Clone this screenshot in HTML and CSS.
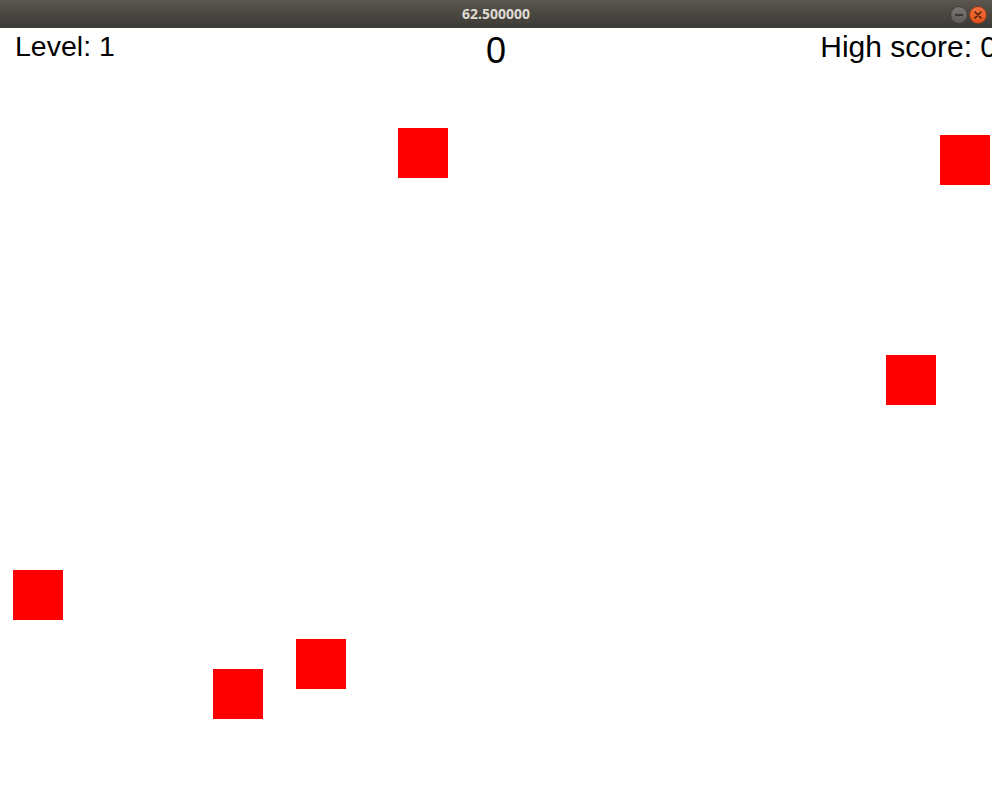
FILE: index.html
```html
<!DOCTYPE html>
<html>
<head>
<meta charset="utf-8">
<link rel="stylesheet" href="styles.css">
</head>
<body>
<div class="window">
  <div class="titlebar">
    <span class="title">62.500000</span>
    <div class="controls">
      <span class="btn btn-min"><span class="dash"></span></span>
      <span class="btn btn-close"><svg width="8" height="8" viewBox="0 0 8 8"><path d="M1 1L7 7M7 1L1 7" stroke="#3a1a0c" stroke-width="1.4" stroke-linecap="round"/></svg></span>
    </div>
  </div>
  <div class="game">
    <div class="hud">
      <span class="level">Level: 1</span>
      <span class="score">0</span>
      <span class="high">High score: 0</span>
    </div>
    <div class="block" style="left:398px;top:100px"></div>
    <div class="block" style="left:940px;top:107px"></div>
    <div class="block" style="left:886px;top:327px"></div>
    <div class="block" style="left:13px;top:542px"></div>
    <div class="block" style="left:296px;top:611px"></div>
    <div class="block" style="left:213px;top:641px"></div>
  </div>
</div>
</body>
</html>
```

FILE: styles.css
```css
html, body {
  margin: 0;
  padding: 0;
  width: 992px;
  height: 812px;
  overflow: hidden;
  background: #ffffff;
}

.window {
  display: flex;
  flex-direction: column;
  width: 992px;
  height: 812px;
}

.titlebar {
  position: relative;
  height: 28px;
  flex: 0 0 28px;
  background: linear-gradient(to bottom, #5b5750 0%, #4a4741 50%, #3c3b37 100%);
  display: flex;
  align-items: center;
  justify-content: center;
}

.title {
  font-family: "Open Sans", "DejaVu Sans", sans-serif;
  font-weight: 700;
  font-size: 14px;
  color: #dfdbd2;
  line-height: 28px;
}

.controls {
  position: absolute;
  right: 5px;
  top: 6px;
  display: flex;
  gap: 1px;
}

.btn {
  width: 18px;
  height: 18px;
  border-radius: 50%;
  box-sizing: border-box;
  display: flex;
  align-items: center;
  justify-content: center;
}

.btn-min {
  background: linear-gradient(to bottom, #7a7671, #5f5c57);
  border: 1px solid #3f3d39;
}

.dash {
  width: 8px;
  height: 1.5px;
  background: #3a3835;
}

.btn-close {
  background: linear-gradient(to bottom, #f4703f, #e2531b);
  border: 1px solid #8a3a16;
}

.game {
  position: relative;
  flex: 1;
  background: #ffffff;
}

.hud {
  display: grid;
  grid-template-columns: 1fr auto 1fr;
  align-items: start;
  padding: 2px 0 0 15px;
  font-family: "Liberation Sans", Arial, sans-serif;
  color: #000000;
}

.level {
  font-size: 28.5px;
  line-height: 33px;
  justify-self: start;
}

.score {
  font-size: 36px;
  line-height: 42px;
  margin-left: -15px;
}

.high {
  font-size: 30px;
  line-height: 34px;
  justify-self: end;
  margin-right: -5px;
  white-space: nowrap;
}

.block {
  position: absolute;
  width: 50px;
  height: 50px;
  background: #ff0000;
}
```
